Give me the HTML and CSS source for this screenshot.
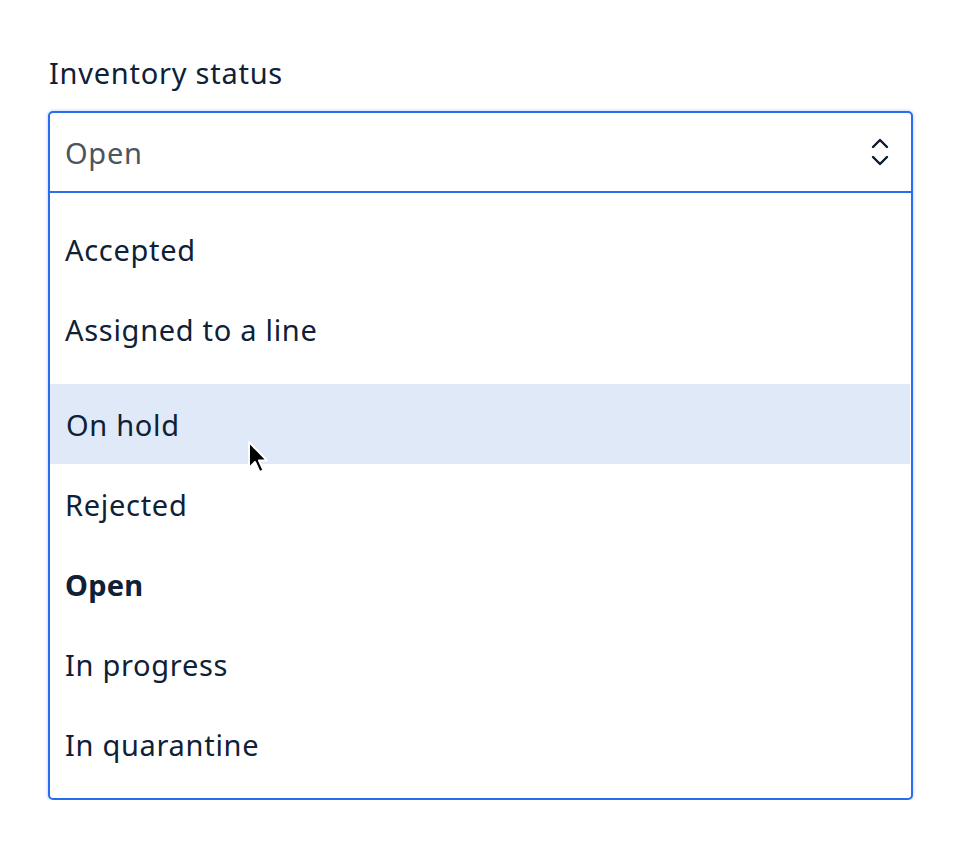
FILE: index.html
```html
<!DOCTYPE html>
<html lang="en">
<head>
<meta charset="utf-8">
<title>Inventory status</title>
<link rel="stylesheet" href="styles.css">
</head>
<body>
<div class="field">
  <div class="label">Inventory status</div>
  <div class="select">
    <div class="control">
      <span class="value">Open</span>
      <svg class="chevron" width="18" height="28" viewBox="0 0 18 28" fill="none" stroke="#0b1a2a" stroke-width="2.4" stroke-linecap="round" stroke-linejoin="round">
        <path d="M2 9 L9 2 L16 9"/>
        <path d="M2 19 L9 26 L16 19"/>
      </svg>
    </div>
    <ul class="menu">
      <li class="option">Accepted</li>
      <li class="option group-end">Assigned to a line</li>
      <li class="option hover">On hold
        <svg class="cursor" width="26" height="38" viewBox="0 0 26 38">
          <path d="M3 2 L3 28 L9 22 L13.5 32 L17.5 30.3 L13 20.5 L21 20.5 Z" fill="#000" stroke="#fff" stroke-width="2" stroke-linejoin="round"/>
        </svg>
      </li>
      <li class="option">Rejected</li>
      <li class="option selected">Open</li>
      <li class="option">In progress</li>
      <li class="option">In quarantine</li>
    </ul>
  </div>
</div>
</body>
</html>
```
FILE: styles.css
```css
html, body {
  margin: 0;
  padding: 0;
  background: #ffffff;
}
body {
  font-family: "Noto Sans", "Open Sans", "Liberation Sans", sans-serif;
  color: #0b1f33;
}
.field {
  padding: 54px 0 0 48px;
  width: 865px;
}
.label {
  font-size: 29px;
  letter-spacing: 0.75px;
  line-height: 38px;
  color: #0e2136;
  margin: 0 0 19px 1px;
}
.select {
  border: 2px solid #2b6cee;
  border-radius: 5px;
  box-shadow: 0 0 3px 1px rgba(43, 108, 238, 0.22);
  background: #fff;
}
.control {
  height: 78px;
  display: flex;
  align-items: center;
  justify-content: space-between;
  padding: 0 22px 0 15px;
  border-bottom: 2px solid #2b6cee;
}
.value {
  font-size: 29px;
  letter-spacing: 0.7px;
  color: #4b5561;
}
.chevron {
  display: block;
}
.menu {
  list-style: none;
  margin: 0;
  padding: 16px 0 14px 0;
}
.option {
  position: relative;
  height: 80px;
  display: flex;
  align-items: center;
  padding-left: 15px;
  font-size: 29px;
  letter-spacing: 0.7px;
  color: #0e2136;
}
.option.group-end {
  margin-bottom: 15px;
}
.option.hover {
  background: #e0e9f7;
  margin-right: 1px;
  padding-left: 16px;
}
.option.selected {
  font-weight: 700;
  letter-spacing: 0.2px;
}
.cursor {
  position: absolute;
  left: 196px;
  top: 56px;
}
```
